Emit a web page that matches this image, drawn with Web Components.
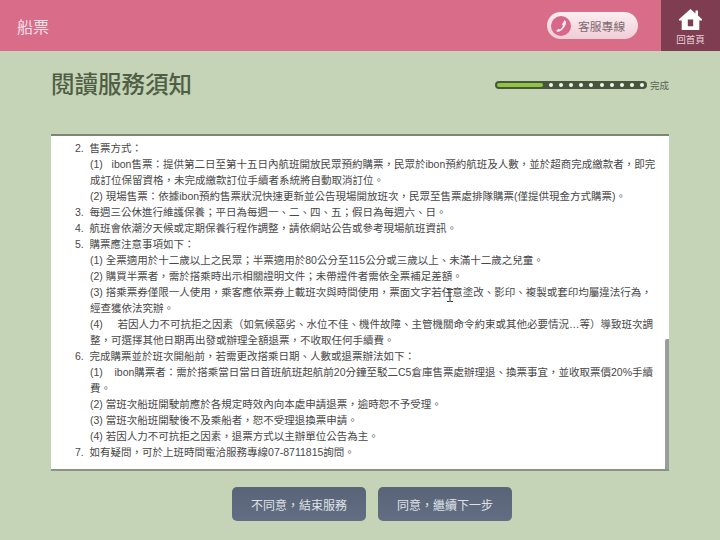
<!DOCTYPE html>
<html lang="zh-Hant">
<head>
<meta charset="utf-8">
<title>閱讀服務須知</title>
<style>
  html, body { margin: 0; height: 100%; }
  body {
    width: 720px;
    height: 540px;
    overflow: hidden;
    background: #c5d3b6;
    font-family: "Liberation Sans", "Noto Sans CJK TC", sans-serif;
  }
</style>
</head>
<body>
<ticket-page>
  <top-bar slot="bar" heading="船票"></top-bar>
  <title-row slot="title" heading="閱讀服務須知" done="完成"></title-row>
  <notice-panel slot="panel">
    <notice-line>2.&nbsp; 售票方式：</notice-line>
    <notice-line sub>(1)&nbsp;&nbsp; ibon售票：提供第二日至第十五日內航班開放民眾預約購票，民眾於ibon預約航班及人數，並於超商完成繳款者，即完</notice-line>
    <notice-line sub>成訂位保留資格，未完成繳款訂位手續者系統將自動取消訂位。</notice-line>
    <notice-line sub>(2) 現場售票：依據ibon預約售票狀況快速更新並公告現場開放班次，民眾至售票處排隊購票(僅提供現金方式購票)。</notice-line>
    <notice-line>3.&nbsp; 每週三公休進行維護保養；平日為每週一、二、四、五；假日為每週六、日。</notice-line>
    <notice-line>4.&nbsp; 航班會依潮汐天候或定期保養行程作調整，請依網站公告或參考現場航班資訊。</notice-line>
    <notice-line>5.&nbsp; 購票應注意事項如下：</notice-line>
    <notice-line sub>(1) 全票適用於十二歲以上之民眾；半票適用於80公分至115公分或三歲以上、未滿十二歲之兒童。</notice-line>
    <notice-line sub>(2) 購買半票者，需於搭乘時出示相關證明文件；未帶證件者需依全票補足差額。</notice-line>
    <notice-line sub>(3) 搭乘票券僅限一人使用，乘客應依票券上載班次與時間使用，票面文字若任意塗改、影印、複製或套印均屬違法行為，</notice-line>
    <notice-line sub>經查獲依法究辦。</notice-line>
    <notice-line sub>(4)&nbsp;&nbsp;&nbsp;&nbsp; 若因人力不可抗拒之因素（如氣候惡劣、水位不佳、機件故障、主管機關命令約束或其他必要情況…等）導致班次調</notice-line>
    <notice-line sub>整，可選擇其他日期再出發或辦理全額退票，不收取任何手續費。</notice-line>
    <notice-line>6.&nbsp; 完成購票並於班次開船前，若需更改搭乘日期、人數或退票辦法如下：</notice-line>
    <notice-line sub>(1)&nbsp;&nbsp;&nbsp; ibon購票者：需於搭乘當日當日首班航班起航前20分鐘至駁二C5倉庫售票處辦理退、換票事宜，並收取票價20%手續</notice-line>
    <notice-line sub>費。</notice-line>
    <notice-line sub>(2) 當班次船班開駛前應於各規定時效內向本處申請退票，逾時恕不予受理。</notice-line>
    <notice-line sub>(3) 當班次船班開駛後不及乘船者，恕不受理退換票申請。</notice-line>
    <notice-line sub>(4) 若因人力不可抗拒之因素，退票方式以主辦單位公告為主。</notice-line>
    <notice-line>7.&nbsp; 如有疑問，可於上班時間電洽服務專線07-8711815詢問。</notice-line>
  </notice-panel>
  <action-button slot="actions">不同意，結束服務</action-button>
  <action-button slot="actions">同意，繼續下一步</action-button>
</ticket-page>

<script>
class TicketPage extends HTMLElement {
    constructor() {
        super();
        this.attachShadow({ mode: 'open' }).innerHTML = `
            <style>
                :host { display: flex; flex-direction: column; height: 540px; }
                .main { padding: 0 51px; display: flex; flex-direction: column; }
                .actions { display: flex; justify-content: center; gap: 12px; padding: 16px 0 0 24px; }
            </style>
            <slot name="bar"></slot>
            <div class="main">
                <slot name="title"></slot>
                <slot name="panel"></slot>
                <div class="actions"><slot name="actions"></slot></div>
            </div>
        `;
    }
}

class TopBar extends HTMLElement {
    connectedCallback() {
        this.attachShadow({ mode: 'open' }).innerHTML = `
            <style>
                :host {
                    display: flex;
                    align-items: center;
                    height: 51px;
                    background: #d86c89;
                }
                h1 {
                    flex: 1;
                    margin: 0 0 0 17px;
                    font: 400 16px "Liberation Sans", "Noto Sans CJK TC", sans-serif;
                    color: #f6dfe5;
                }
                .pill {
                    display: flex;
                    align-items: center;
                    gap: 7px;
                    width: 91px;
                    height: 27px;
                    box-sizing: border-box;
                    padding-left: 4px;
                    margin-right: 23px;
                    border-radius: 14px;
                    background: linear-gradient(#fbeef1, #f0cdd7);
                    color: #7e6a72;
                    font-size: 11.8px;
                }
                .pill i {
                    display: flex;
                    align-items: center;
                    justify-content: center;
                    width: 20px;
                    height: 20px;
                    border-radius: 50%;
                    background: #d9678a;
                }
                .home {
                    display: flex;
                    flex-direction: column;
                    align-items: center;
                    width: 59px;
                    height: 51px;
                    box-sizing: border-box;
                    padding-top: 9px;
                    background: #7f3d52;
                    color: #e6cfd6;
                    font-size: 9.5px;
                    line-height: 12px;
                }
                .home svg { margin-bottom: 4px; }
            </style>
            <h1>${this.getAttribute('heading')}</h1>
            <div class="pill">
                <i><svg width="13" height="14" viewBox="0 0 13 14"><path d="M9.6 1 C11.6 2.4 11.4 4.6 10 7 C8.4 9.8 6.200 12 3.400 12.800 C2.400 13 1.600 12.600 1.200 11.800 L3.600 9.800 L5 10.400 C6.400 9.400 7.600 7.800 8 6.400 L7 5.200 Z" fill="#fbeef1"/></svg></i>
                <span>客服專線</span>
            </div>
            <div class="home">
                <svg width="23" height="21" viewBox="0 0 23 20" preserveAspectRatio="none">
                    <path fill="#fff" fill-rule="evenodd" d="M11.500 0 L16.500 4.200 V1.500 H19 V6.300 L23 9.700 V11 H20.300 V20 H2.700 V11 H0 V9.700 Z M8.800 10 V16.500 H14.200 V10 Z"/>
                </svg>
                <span>回首頁</span>
            </div>
        `;
    }
}

class TitleRow extends HTMLElement {
    connectedCallback() {
        const dots = '<b></b>'.repeat(10);
        this.attachShadow({ mode: 'open' }).innerHTML = `
            <style>
                :host {
                    display: flex;
                    align-items: center;
                    justify-content: space-between;
                    height: 83px;
                    box-sizing: border-box;
                    padding-bottom: 19px;
                }
                h2 {
                    margin: 0;
                    font: 500 23.500px "Liberation Sans", "Noto Sans CJK TC", sans-serif;
                    color: #4f5f45;
                }
                .progress {
                    display: flex;
                    align-items: center;
                    gap: 3px;
                    color: #5b6653;
                    font-size: 9.500px;
                    padding-top: 4px;
                }
                .track {
                    display: flex;
                    align-items: center;
                    width: 152px;
                    height: 8px;
                    box-sizing: border-box;
                    padding: 0 2px;
                    border-radius: 4px;
                    background: #47563d;
                }
                .fill { width: 46px; height: 4px; border-radius: 2px; background: #90c63f; margin-right: 5px; }
                .dots { flex: 1; display: flex; justify-content: space-between; padding: 0 1px 0 1px; }
                b { width: 4px; height: 4px; border-radius: 50%; background: #f4f6ef; }
            </style>
            <h2>${this.getAttribute('heading')}</h2>
            <div class="progress">
                <div class="track"><div class="fill"></div><div class="dots">${dots}</div></div>
                <span>${this.getAttribute('done')}</span>
            </div>
        `;
    }
}

class NoticePanel extends HTMLElement {
    constructor() {
        super();
        this.attachShadow({ mode: 'open' }).innerHTML = `
            <style>
                :host {
                    display: block;
                    position: relative;
                    height: 337px;
                    box-sizing: border-box;
                    padding: 4px 0 0 24px;
                    background: #fff;
                    border-top: 2px solid #7d8579;
                    border-bottom: 2px solid #8a9485;
                    overflow: hidden;
                }
                .thumb {
                    position: absolute;
                    right: 0;
                    top: 203px;
                    width: 4px;
                    height: 130px;
                    background: #9b9b9e;
                    border-radius: 2px 0 0 0;
                }
                svg { position: absolute; left: 395px; top: 153px; }
            </style>
            <slot></slot>
            <div class="thumb"></div>
            <svg width="8" height="13" viewBox="0 0 8 13" fill="none" stroke="#333" stroke-width="1">
                <path d="M1 .5 H3.500 L4 1 L4.500 .5 H7 M4 1 V12 M1 12.500 H3.500 L4 12 L4.500 12.500 H7"/>
            </svg>
        `;
    }
}

class NoticeLine extends HTMLElement {
    constructor() {
        super();
        this.attachShadow({ mode: 'open' }).innerHTML = `
            <style>
                :host {
                    display: block;
                    height: 16px;
                    line-height: 16px;
                    font-size: 10.500px;
                    color: #484848;
                    white-space: nowrap;
                }
                :host([sub]) { padding-left: 15px; }
            </style>
            <slot></slot>
        `;
    }
}

class ActionButton extends HTMLElement {
    constructor() {
        super();
        this.attachShadow({ mode: 'open' }).innerHTML = `
            <style>
                :host {
                    display: flex;
                    align-items: center;
                    justify-content: center;
                    width: 134px;
                    height: 34px;
                    border-radius: 5px;
                    background: linear-gradient(#5a6478, #636d83);
                    color: #dfe3e7;
                    font-size: 12px;
                }
            </style>
            <slot></slot>
        `;
    }
}

customElements.define('ticket-page', TicketPage);
customElements.define('top-bar', TopBar);
customElements.define('title-row', TitleRow);
customElements.define('notice-panel', NoticePanel);
customElements.define('notice-line', NoticeLine);
customElements.define('action-button', ActionButton);
</script>
</body>
</html>
